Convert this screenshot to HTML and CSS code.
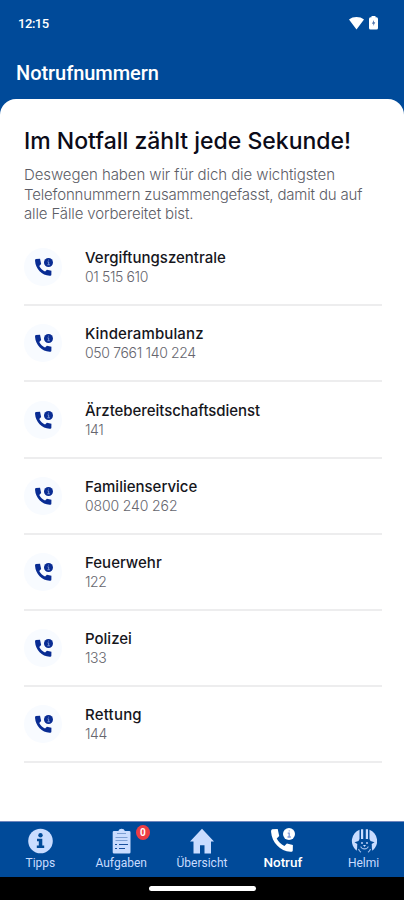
FILE: index.html
```html
<!DOCTYPE html>
<html lang="de">
<head>
<meta charset="utf-8">
<title>Notrufnummern</title>
<link rel="stylesheet" href="styles.css">
</head>
<body>
<svg class="defs" aria-hidden="true">
  <symbol id="phone" viewBox="0 0 24 24">
    <path fill="currentColor" d="M1.200 1.200C.2 1.700 0 2.700.1 4 .8 14.500 9.200 23.200 19.500 23.700c1.500.1 2.200-.4 2.300-1.500l.1-5.200-6-1.400-2.500 2.500C9.900 16.300 7.300 13.700 5.700 10.500L8.200 8 6.700.9Z"/>
    <circle cx="18" cy="6" r="6" fill="currentColor"/>
    <path class="phone-mark" d="M16.700 5.200h1.500v3.600M16.500 9h3.300M17.700 2.800h1"/>
  </symbol>
</svg>
<div class="app">
  <header class="top">
    <div class="status">
      <span>12:15</span>
      <div class="status-icons">
        <svg width="15" height="13" viewBox="0 0 15 13"><path fill="#fff" d="M0 2.500C4-.8 11-.8 15 2.500L7.500 12.500Z"/></svg>
        <svg width="9" height="14" viewBox="0 0 9 14"><path fill="#fff" d="M2.500 1.200V0h4v1.200h1Q9 1.200 9 3v9q0 1.500-1.500 1.500h-6Q0 13.500 0 12V3q0-1.800 1.500-1.800Z"/><path fill="#5376ae" d="M5 4 2.900 7.700h1.400V10l2-3.700H5Z"/></svg>
      </div>
    </div>
    <h1>Notrufnummern</h1>
  </header>
  <main class="sheet">
    <h2>Im Notfall zählt jede Sekunde!</h2>
    <p class="intro"><span class="l1">Deswegen haben wir für dich die wichtigsten</span><br><span class="l2">Telefonnummern zusammengefasst, damit du auf</span><br><span class="l3">alle Fälle vorbereitet bist.</span></p>
    <ul class="list">
      <li><span class="bubble"><svg class="call"><use href="#phone"/></svg></span><div class="entry"><b>Vergiftungszentrale</b><span class="p1">01 515 610</span></div></li>
      <li><span class="bubble"><svg class="call"><use href="#phone"/></svg></span><div class="entry"><b class="n2">Kinderambulanz</b><span class="p2">050 7661 140 224</span></div></li>
      <li><span class="bubble"><svg class="call"><use href="#phone"/></svg></span><div class="entry"><b class="n3">Ärztebereitschaftsdienst</b><span class="p3">141</span></div></li>
      <li><span class="bubble"><svg class="call"><use href="#phone"/></svg></span><div class="entry"><b>Familienservice</b><span class="p4">0800 240 262</span></div></li>
      <li><span class="bubble"><svg class="call"><use href="#phone"/></svg></span><div class="entry"><b>Feuerwehr</b><span class="p3">122</span></div></li>
      <li><span class="bubble"><svg class="call"><use href="#phone"/></svg></span><div class="entry"><b>Polizei</b><span class="p3">133</span></div></li>
      <li><span class="bubble"><svg class="call"><use href="#phone"/></svg></span><div class="entry"><b class="n7">Rettung</b><span class="p3">144</span></div></li>
    </ul>
  </main>
  <nav class="tabs">
    <div class="tab"><svg width="26" height="26" viewBox="0 0 26 26"><circle cx="13.500" cy="13" r="12.300" fill="currentColor"/><circle cx="13.500" cy="7.200" r="2.200" fill="#004a99"/><path fill="#004a99" d="M10 10.700h5.300v6.800h1.900v2.600H9.800v-2.600h2v-4.200H10Z"/></svg><span>Tipps</span></div>
    <div class="tab"><svg width="26" height="26" viewBox="0 0 26 26"><path fill="currentColor" d="M6 3h4.300a3.500 3.500 0 0 1 6.600 0h4.300q1.300 0 1.300 1.300v20q0 1.200-1.300 1.200H6q-1.300 0-1.300-1.200v-20Q4.700 3 6 3Z"/><path stroke="#7c9fd4" stroke-width="1" fill="none" d="M9 5.500h9M7.500 9.500h12M7.500 12.500h12"/><path stroke="#174f9e" stroke-width="1.200" fill="none" d="M7 16.500h2m2 0h9M7 20.500h2m2 0h6"/></svg><i class="badge">0</i><span>Aufgaben</span></div>
    <div class="tab"><svg width="26" height="26" viewBox="0 0 26 26"><path fill="currentColor" d="M13 .8 1 13.500h3.500v12H11v-8.200h4.500v8.200H22v-12h3Z"/></svg><span>Übersicht</span></div>
    <div class="tab active"><svg class="tab-call"><use href="#phone"/></svg><span>Notruf</span></div>
    <div class="tab"><svg width="26" height="26" viewBox="0 0 26 26"><path fill="currentColor" d="M8.500 1.700A12.300 12.300 0 0 0 5.500 22.700C6.500 20.500 6 18.500 6.300 16L3.500 14.300l4-1.300 1-2ZM18.500 1.700A12.300 12.300 0 0 1 21.500 22.700c-1-2.200-.5-4.200-.8-6.700l2.800-1.700-4-1.300-1-2ZM10 1.200h2.200V11H10ZM14.800 1.200H17V11h-2.200Z"/><path fill="none" stroke="currentColor" stroke-width="1.100" stroke-opacity=".8" d="M9.800 18.500c.7 3.200 6.700 3.200 7.400 0M7.500 21q1 2.500 2.500 3.300M19.500 21q-1 2.500-2.500 3.300"/><circle cx="11" cy="15" r=".9" fill="currentColor"/><circle cx="16" cy="15" r=".9" fill="currentColor"/><path fill="currentColor" d="M12 17h3l-1.500 2Z"/></svg><span>Helmi</span></div>
  </nav>
  <div class="home"><span></span></div>
</div>
</body>
</html>
```
FILE: styles.css
```css
* { box-sizing: border-box; }
body { margin: 0; background: #004a99; font-family: Inter, sans-serif; }
.defs { position: absolute; width: 0; height: 0; }
.app { width: 404px; height: 900px; display: flex; flex-direction: column; background: #004a99; }

.top { height: 99px; flex: none; color: #fff; font-family: Roboto, sans-serif; }
.status { height: 46px; padding: 0 26px 0 18px; display: flex; align-items: center; justify-content: space-between; font-size: 13px; font-weight: 500; letter-spacing: -.45px; }
.status-icons { display: flex; align-items: center; gap: 5px; }
h1 { margin: 0; padding-left: 16px; font-size: 20px; line-height: 54px; font-weight: 500; letter-spacing: -.05px; }

.sheet { flex: 1; min-height: 0; padding: 28px 22px 0 24px; background: #fff; border-radius: 16px 16px 0 0; }
h2 { margin: 0; font-size: 23px; line-height: 28px; font-weight: 500; color: #0b0b18; white-space: nowrap; }
.intro { margin: 10px 0 0; font-size: 15px; line-height: 19.500px; font-weight: 300; color: #5c5d66; white-space: nowrap; }
.l1 { letter-spacing: -.08px; }
.l2 { letter-spacing: -.17px; }
.l3 { letter-spacing: -.13px; }
.list { margin: 6.700px 0 0; padding: 0; list-style: none; }
.list li { height: 76.150px; display: flex; align-items: center; border-bottom: 2px solid #ededee; }
.bubble { width: 38px; height: 38px; margin-right: 23px; border-radius: 50%; background: #f8fbff; display: flex; align-items: center; justify-content: center; color: #092c93; }
.call { width: 18px; height: 18px; margin-left: 1px; }
.phone-mark { fill: none; stroke: #7f98d6; stroke-width: 1.300px; }
.entry { display: flex; flex-direction: column; font-size: 14px; line-height: 19px; white-space: nowrap; }
.entry b { font-size: 15px; font-weight: 500; color: #16161c; }
.entry .n2 { letter-spacing: .12px; }
.entry .n3 { letter-spacing: -.05px; }
.entry .n7 { letter-spacing: .2px; }
.entry span { font-weight: 300; color: #66666e; }
.entry .p1 { letter-spacing: -.38px; }
.entry .p2 { letter-spacing: -.33px; }
.entry .p3 { letter-spacing: -.4px; }
.entry .p4 { letter-spacing: -.12px; }

.tabs { height: 56px; flex: none; display: grid; grid-template-columns: repeat(5, 1fr); background: #004a99; border-top: 1px solid #6f86bd; color: #c9dcff; font-family: Roboto, sans-serif; }
.tab { position: relative; display: flex; flex-direction: column; align-items: center; padding-top: 6px; font-size: 12px; line-height: 18px; }
.tab.active { color: #fff; font-size: 13.500px; font-weight: 500; }
.tab-call { width: 24px; height: 24px; margin: 0 0 1px 1px; }
.badge { position: absolute; left: 55px; top: 3px; width: 14px; height: 15px; border-radius: 50%; background: #ec3d44; color: #fff; font: 700 10px/15px Roboto, sans-serif; text-align: center; }
.home { height: 23px; flex: none; background: #000; display: flex; justify-content: center; padding-top: 9px; }
.home span { width: 107px; height: 5px; border-radius: 3px; background: #fff; }
```
